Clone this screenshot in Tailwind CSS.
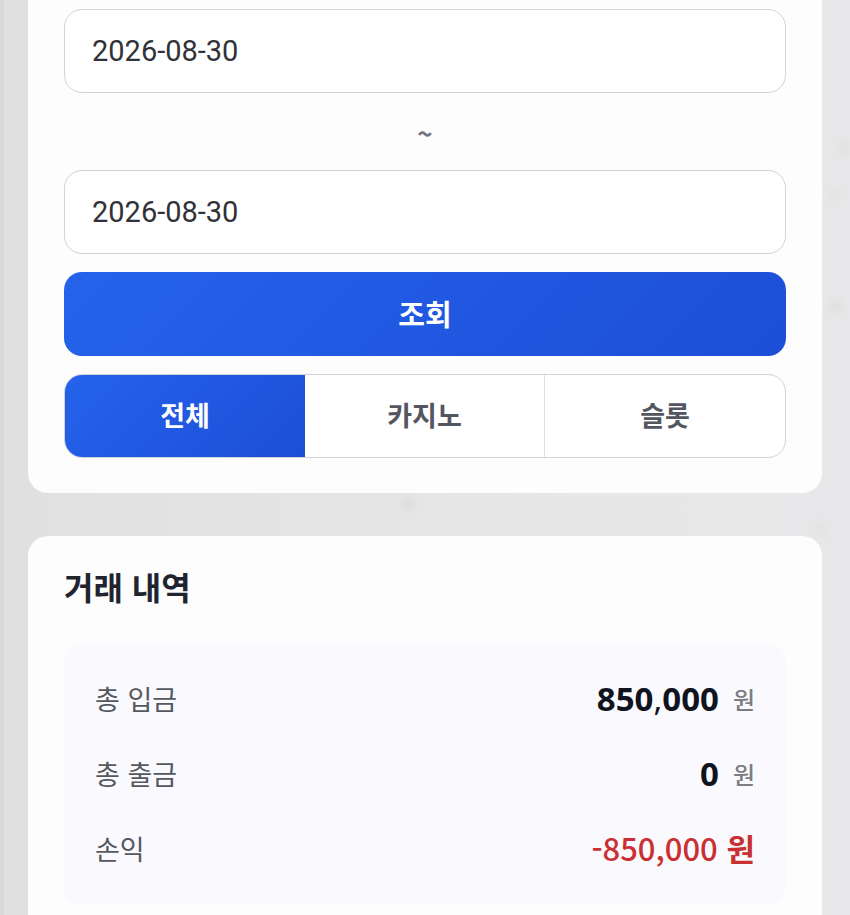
<!DOCTYPE html>
<html lang="ko">
<head>
    <meta charset="UTF-8" />
    <meta name="viewport" content="width=device-width, initial-scale=1.0"/>
    <title>거래 내역</title>
    <script src="https://cdn.jsdelivr.net/npm/@tailwindcss/browser@4"></script>
</head>
<body class="relative min-h-screen overflow-x-hidden border-l-4 border-[#d9d9d9] bg-linear-to-r from-[#e0e0e0] via-[#e6e6e7] to-[#e8e8ea] pr-7 pl-6 font-['Noto_Sans_CJK_KR',sans-serif] text-[#1f2430]">

    <!-- Faint background specks -->
    <div class="absolute top-[140px] right-0 h-4 w-3 rounded-full bg-[#e0e0e2] blur-xs"></div>
    <div class="absolute top-[188px] right-2 h-3 w-3 rounded-full bg-[#e2e2e4] blur-xs"></div>
    <div class="absolute top-[300px] right-2 h-3 w-3 rounded-full bg-[#dcdcde] blur-xs"></div>
    <div class="absolute top-[498px] left-[398px] h-3 w-3 rounded-full bg-[#dcdcde] blur-xs"></div>
    <div class="absolute top-[522px] right-6 h-4 w-3 rounded-full bg-[#e2e2e4] blur-xs"></div>

    <main class="relative space-y-[43px]">
        <!-- Search filters -->
        <section class="rounded-b-[20px] bg-[#fdfdfe] px-9 pt-[9px] pb-[35px]">
            <form class="flex flex-col gap-[18px]">
                <input type="text" id="startDate" aria-label="시작일" value="2026-08-30"
                       class="h-[84px] w-full rounded-[18px] border border-[#d1d3d7] bg-white px-[27px] font-[Roboto,sans-serif] text-[29px] text-[#303238]" />
                <span class="h-[41px] text-center text-[26px] leading-[43px] font-bold text-[#73767c]">~</span>
                <input type="text" id="endDate" aria-label="종료일" value="2026-08-30"
                       class="h-[84px] w-full rounded-[18px] border border-[#d1d3d7] bg-white px-[27px] font-[Roboto,sans-serif] text-[29px] text-[#303238]" />
                <button type="button" class="h-[84px] w-full rounded-[18px] bg-linear-135 from-[#2563eb] to-[#1d4ed8] text-[29px] font-bold text-white">조회</button>
                <div class="grid h-[84px] grid-cols-3 overflow-hidden rounded-[18px] border border-[#d1d3d7] bg-white text-[27px] leading-10 font-bold text-[#53565f]">
                    <button type="button" class="bg-linear-135 from-[#2563eb] to-[#1d4ed8] pb-[2px] text-white">전체</button>
                    <button type="button" class="border-r border-[#e0e1e5] pb-[2px]">카지노</button>
                    <button type="button" class="pb-[2px]">슬롯</button>
                </div>
            </form>
        </section>

        <!-- Transaction summary -->
        <section class="rounded-t-[20px] bg-[#fdfdfe] px-9 pt-[26px] pb-9">
            <h2 class="text-[32px] leading-12 font-bold">거래 내역</h2>
            <dl class="mt-[34px] space-y-[30px] rounded-[18px] bg-[#fafafe] px-[31px] pt-8 pb-[34px]">
                <div class="flex h-[45px] items-center justify-between">
                    <dt class="text-[27px] leading-[45px] text-[#55585f]">총 입금</dt>
                    <dd class="flex items-center gap-[14px]">
                        <span class="font-['Noto_Sans',sans-serif] text-[33px] leading-[45px] font-bold text-[#10141f]">850<span class="font-normal">,</span>000</span>
                        <span class="text-[24px] leading-[45px] font-medium text-[#7b7d82]">원</span>
                    </dd>
                </div>
                <div class="flex h-[45px] items-center justify-between">
                    <dt class="text-[27px] leading-[45px] text-[#55585f]">총 출금</dt>
                    <dd class="flex items-center gap-[14px]">
                        <span class="font-['Noto_Sans',sans-serif] text-[33px] leading-[45px] font-bold text-[#10141f]">0</span>
                        <span class="text-[24px] leading-[45px] font-medium text-[#7b7d82]">원</span>
                    </dd>
                </div>
                <div class="flex h-[45px] items-center justify-between">
                    <dt class="text-[27px] leading-[45px] text-[#55585f]">손익</dt>
                    <dd class="pb-[2px] text-[31px] leading-[43px] font-bold text-[#c93034]"><span class="font-medium">-850,000</span> 원</dd>
                </div>
            </dl>
        </section>
    </main>
</body>
</html>
